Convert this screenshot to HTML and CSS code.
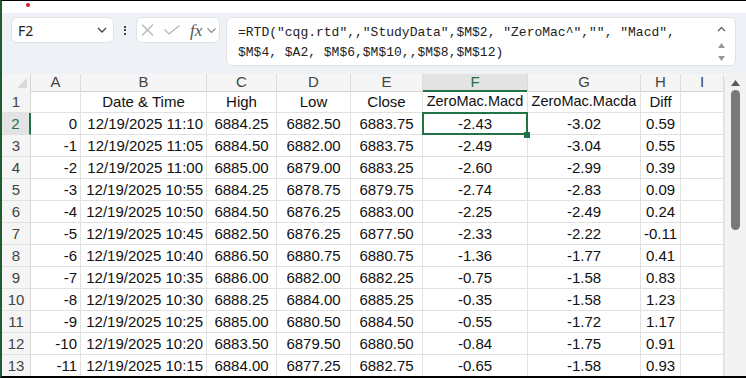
FILE: index.html
```html
<!DOCTYPE html>
<html lang="en">
<head>
    <meta charset="UTF-8">
    <title>RTD StudyData</title>
    <link rel="stylesheet" href="styles.css">
</head>
<body>
<div class="window">

    <!-- title strip -->
    <div class="top-strip"><span class="rec-dot"></span></div>

    <!-- Formula bar -->
    <div class="formula-area">
        <div class="name-box">
            <span>F2</span>
            <svg width="10" height="6" viewBox="0 0 10 6"><path d="M1 1 L5 5 L9 1" fill="none" stroke="#444" stroke-width="1.3"/></svg>
        </div>
        <div class="dots"><i></i><i></i><i></i></div>
        <div class="fx-box">
            <svg class="ic-x" width="13" height="12" viewBox="0 0 13 12"><path d="M1 0.5 L12 11.5 M12 0.5 L1 11.5" stroke="#b5b5b5" stroke-width="1.2"/></svg>
            <svg class="ic-check" width="16" height="10" viewBox="0 0 16 10"><path d="M0.5 4.5 L5 9 L15.5 0.5" fill="none" stroke="#b5b5b5" stroke-width="1.2"/></svg>
            <span class="fx">fx</span>
            <svg class="ic-more" width="9" height="5" viewBox="0 0 9 5"><path d="M0.5 0.5 L4.5 4.5 L8.5 0.5" fill="none" stroke="#888" stroke-width="1.1"/></svg>
        </div>
        <div class="formula-box">
            <div class="formula-text">=RTD("cqg.rtd",,"StudyData",$M$2, "ZeroMac^","", "Macd",
$M$4, $A2, $M$6,$M$10,,$M$8,$M$12)</div>
            <div class="formula-ctrl">
                <svg class="caret" width="9" height="6" viewBox="0 0 9 6"><path d="M1 5 L4.5 1.5 L8 5" fill="none" stroke="#555" stroke-width="1.2"/></svg>
                <svg class="tri-up" width="7" height="5" viewBox="0 0 7 5"><path d="M0 5 L3.5 0 L7 5Z" fill="#9a9a9a"/></svg>
                <svg class="tri-down" width="7" height="5" viewBox="0 0 7 5"><path d="M0 0 L3.5 5 L7 0Z" fill="#9a9a9a"/></svg>
            </div>
        </div>
    </div>

    <!-- Sheet -->
    <div class="sheet">
        <div class="grid">
            <div class="row head">
                <div class="corner"></div>
                <div class="ch">A</div><div class="ch">B</div><div class="ch">C</div><div class="ch">D</div>
                <div class="ch">E</div><div class="ch active">F</div><div class="ch">G</div><div class="ch">H</div><div class="ch">I</div>
            </div>
            <div class="row">
                <div class="rh">1</div>
                <div class="c"></div><div class="c m">Date &amp; Time</div><div class="c m">High</div><div class="c m">Low</div>
                <div class="c m">Close</div><div class="c m sm">ZeroMac.Macd</div><div class="c m sm">ZeroMac.Macda</div><div class="c m">Diff</div><div class="c"></div>
            </div>
            <div class="row">
                <div class="rh active">2</div>
                <div class="c r">0</div><div class="c r">12/19/2025 11:10</div><div class="c m">6884.25</div><div class="c m">6882.50</div>
                <div class="c m">6883.75</div><div class="c m sel">-2.43</div><div class="c m">-3.02</div><div class="c m">0.59</div><div class="c"></div>
            </div>
            <div class="row">
                <div class="rh">3</div>
                <div class="c r">-1</div><div class="c r">12/19/2025 11:05</div><div class="c m">6884.50</div><div class="c m">6882.00</div>
                <div class="c m">6883.75</div><div class="c m">-2.49</div><div class="c m">-3.04</div><div class="c m">0.55</div><div class="c"></div>
            </div>
            <div class="row">
                <div class="rh">4</div>
                <div class="c r">-2</div><div class="c r">12/19/2025 11:00</div><div class="c m">6885.00</div><div class="c m">6879.00</div>
                <div class="c m">6883.25</div><div class="c m">-2.60</div><div class="c m">-2.99</div><div class="c m">0.39</div><div class="c"></div>
            </div>
            <div class="row">
                <div class="rh">5</div>
                <div class="c r">-3</div><div class="c r">12/19/2025 10:55</div><div class="c m">6884.25</div><div class="c m">6878.75</div>
                <div class="c m">6879.75</div><div class="c m">-2.74</div><div class="c m">-2.83</div><div class="c m">0.09</div><div class="c"></div>
            </div>
            <div class="row">
                <div class="rh">6</div>
                <div class="c r">-4</div><div class="c r">12/19/2025 10:50</div><div class="c m">6884.50</div><div class="c m">6876.25</div>
                <div class="c m">6883.00</div><div class="c m">-2.25</div><div class="c m">-2.49</div><div class="c m">0.24</div><div class="c"></div>
            </div>
            <div class="row">
                <div class="rh">7</div>
                <div class="c r">-5</div><div class="c r">12/19/2025 10:45</div><div class="c m">6882.50</div><div class="c m">6876.25</div>
                <div class="c m">6877.50</div><div class="c m">-2.33</div><div class="c m">-2.22</div><div class="c m">-0.11</div><div class="c"></div>
            </div>
            <div class="row">
                <div class="rh">8</div>
                <div class="c r">-6</div><div class="c r">12/19/2025 10:40</div><div class="c m">6886.50</div><div class="c m">6880.75</div>
                <div class="c m">6880.75</div><div class="c m">-1.36</div><div class="c m">-1.77</div><div class="c m">0.41</div><div class="c"></div>
            </div>
            <div class="row">
                <div class="rh">9</div>
                <div class="c r">-7</div><div class="c r">12/19/2025 10:35</div><div class="c m">6886.00</div><div class="c m">6882.00</div>
                <div class="c m">6882.25</div><div class="c m">-0.75</div><div class="c m">-1.58</div><div class="c m">0.83</div><div class="c"></div>
            </div>
            <div class="row">
                <div class="rh">10</div>
                <div class="c r">-8</div><div class="c r">12/19/2025 10:30</div><div class="c m">6888.25</div><div class="c m">6884.00</div>
                <div class="c m">6885.25</div><div class="c m">-0.35</div><div class="c m">-1.58</div><div class="c m">1.23</div><div class="c"></div>
            </div>
            <div class="row">
                <div class="rh">11</div>
                <div class="c r">-9</div><div class="c r">12/19/2025 10:25</div><div class="c m">6885.00</div><div class="c m">6880.50</div>
                <div class="c m">6884.50</div><div class="c m">-0.55</div><div class="c m">-1.72</div><div class="c m">1.17</div><div class="c"></div>
            </div>
            <div class="row">
                <div class="rh">12</div>
                <div class="c r">-10</div><div class="c r">12/19/2025 10:20</div><div class="c m">6883.50</div><div class="c m">6879.50</div>
                <div class="c m">6880.50</div><div class="c m">-0.84</div><div class="c m">-1.75</div><div class="c m">0.91</div><div class="c"></div>
            </div>
            <div class="row">
                <div class="rh">13</div>
                <div class="c r">-11</div><div class="c r">12/19/2025 10:15</div><div class="c m">6884.00</div><div class="c m">6877.25</div>
                <div class="c m">6882.75</div><div class="c m">-0.65</div><div class="c m">-1.58</div><div class="c m">0.93</div><div class="c"></div>
            </div>
        </div>

        <!-- vertical scrollbar -->
        <div class="vscroll">
            <svg class="arrow-up" width="9" height="6" viewBox="0 0 9 6"><path d="M0 6 L4.5 0 L9 6Z" fill="#5a5a5a"/></svg>
            <div class="thumb"></div>
        </div>
    </div>
</div>
</body>
</html>
```

FILE: styles.css
```css
body {
    margin: 0;
    overflow: hidden;
    background-color: #fff;
}
.window {
    width: 746px;
    height: 378px;
    box-sizing: border-box;
    border-top: 1px solid #000;
    border-left: 2px solid #1e5a32;
    border-bottom: 2px solid #000;
    overflow: hidden;
    font-family: "Liberation Sans", Arial, sans-serif;
}

/* top strip */
.top-strip {
    height: 12px;
    padding-left: 24px;
    box-sizing: border-box;
    padding-top: 2px;
}
.rec-dot {
    display: block;
    width: 4px;
    height: 4px;
    border-radius: 50%;
    background-color: #e3141c;
}

/* formula bar */
.formula-area {
    height: 61px;
    box-sizing: border-box;
    background-color: #eef1f5;
    display: flex;
    align-items: flex-start;
    padding: 4px 10px 0 9px;
}
.name-box {
    width: 103px;
    height: 26px;
    box-sizing: border-box;
    background-color: #fff;
    border: 1px solid #dfe3e8;
    border-radius: 6px;
    display: flex;
    align-items: center;
    justify-content: space-between;
    padding: 0 6px 0 6px;
    font-family: "Noto Sans", sans-serif;
    font-size: 14px;
    color: #222;
}
.dots {
    width: 22px;
    height: 26px;
    display: flex;
    flex-direction: column;
    align-items: center;
    justify-content: center;
    gap: 1.5px;
}
.dots i {
    display: block;
    width: 2px;
    height: 2px;
    background-color: #444;
}
.fx-box {
    width: 84px;
    height: 26px;
    box-sizing: border-box;
    background-color: #fff;
    border: 1px solid #dfe3e8;
    border-radius: 6px;
    display: flex;
    align-items: center;
    padding-left: 4px;
}
.ic-check {
    margin-left: 10px;
}
.fx {
    margin-left: 10px;
    font-family: "Liberation Serif", serif;
    font-style: italic;
    font-size: 17px;
    color: #555;
    line-height: 17px;
}
.ic-more {
    margin-left: 5px;
}
.formula-box {
    flex: 1;
    margin-left: 6px;
    height: 49px;
    box-sizing: border-box;
    background-color: #fff;
    border: 1px solid #dfe3e8;
    border-radius: 6px;
    display: flex;
    padding: 5px 0 0 11px;
}
.formula-text {
    flex: 1;
    white-space: pre;
    font-family: "Liberation Mono", "Courier New", monospace;
    font-size: 13px;
    line-height: 20px;
    color: #222;
}
.formula-ctrl {
    width: 20px;
    display: flex;
    flex-direction: column;
    align-items: center;
    padding-right: 4px;
}
.caret {
    margin-top: 3px;
}
.tri-up {
    margin-top: 11px;
}
.tri-down {
    margin-top: 8px;
}

/* sheet */
.sheet {
    display: flex;
}
.grid {
    width: 722px;
}
.row {
    display: grid;
    grid-template-columns: 29px 50px 126px 70px 74px 72px 105px 113px 40px 43px;
    height: 22px;
}
.row.head {
    height: 17px;
}
.corner {
    background-color: #f5f5f5;
    border-right: 1px solid #d6d6d6;
    border-bottom: 1px solid #d6d6d6;
    display: flex;
    justify-content: flex-end;
    align-items: flex-end;
    padding: 0 3px 3px 0;
}
.corner::after {
    content: "";
    border-left: 10px solid transparent;
    border-bottom: 10px solid #d9d9d9;
}
.ch {
    background-color: #f5f5f5;
    border-right: 1px solid #dcdcdc;
    border-bottom: 1px solid #d6d6d6;
    color: #444;
    font-size: 15px;
    line-height: 16px;
    text-align: center;
}
.ch.active {
    background-color: #e3e3e3;
    border-bottom: 2px solid #217346;
    color: #217346;
}
.rh {
    background-color: #f5f5f5;
    border-right: 1px solid #d6d6d6;
    border-bottom: 1px solid #e1e1e1;
    color: #444;
    font-size: 15px;
    line-height: 21px;
    text-align: center;
}
.rh.active {
    background-color: #e3e3e3;
    border-right: 2px solid #217346;
    color: #217346;
}
.c {
    border-right: 1px solid #e1e1e1;
    border-bottom: 1px solid #e1e1e1;
    font-size: 15px;
    line-height: 21px;
    color: #111;
    padding: 0 3px;
    white-space: nowrap;
}
.c.r {
    text-align: right;
}
.c.m {
    text-align: center;
    padding: 0;
}
.c.sm {
    font-size: 14.5px;
}
.c.sel {
    position: relative;
}
.c.sel::before {
    content: "";
    position: absolute;
    top: -1px;
    left: -1px;
    right: -1px;
    bottom: -1px;
    border: 2px solid #217346;
}
.c.sel::after {
    content: "";
    position: absolute;
    right: -3px;
    bottom: -4px;
    width: 6px;
    height: 6px;
    background-color: #217346;
}

/* scrollbar */
.vscroll {
    width: 22px;
    height: 304px;
    box-sizing: border-box;
    background-color: #f3f3f3;
    border-left: 1px solid #e4e6ea;
    border-top-left-radius: 6px;
    display: flex;
    flex-direction: column;
    align-items: center;
    padding-top: 6px;
}
.thumb {
    margin-top: 4px;
    width: 9px;
    height: 140px;
    border-radius: 5px;
    background-color: #797979;
}
```
